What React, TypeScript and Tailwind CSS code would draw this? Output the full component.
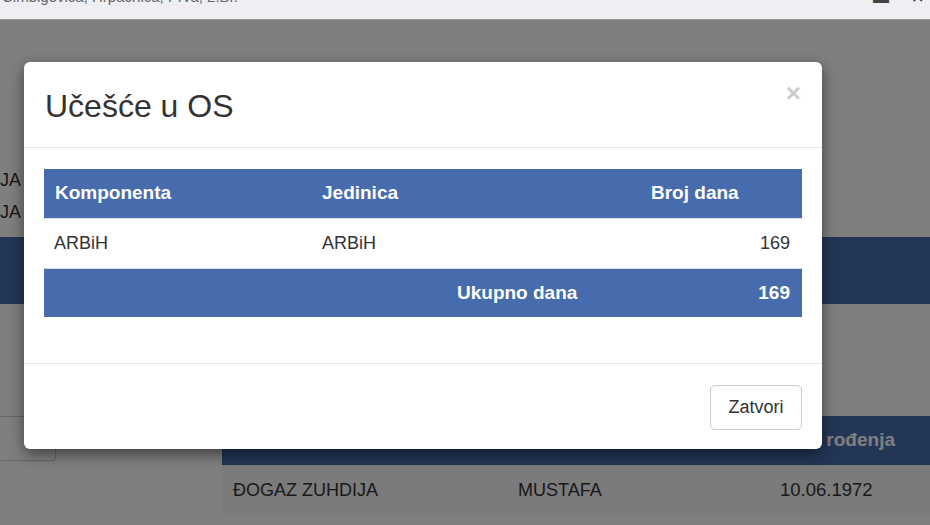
import { FC } from 'react'

const font = { fontFamily: '"Liberation Sans", Arial, sans-serif' }

const Modal: FC = () => {
  return (
    <div className="absolute left-[24px] top-[42px] w-[798px] h-[387px] bg-white rounded-[6px] shadow-[0_5px_15px_rgba(0,0,0,0.5)] flex flex-col">
      <div className="h-[86px] flex-none flex justify-between items-center px-[21px] border-b border-[#e5e5e5]">
        <h3 className="text-[32px] leading-[34px] text-[#333] mt-[2px]">Učešće u OS</h3>
        <button className="self-start mt-[18px] text-[26px] leading-none font-bold text-[#cccccc]">×</button>
      </div>
      <div className="flex-none px-[20px] pt-[21px] pb-[46px] border-b border-[#e5e5e5]">
        <div className="text-[18px]">
          <div className="grid grid-cols-[268px_329px_1fr] h-[49px] items-center bg-[#476cad] text-white font-bold text-[19px]">
            <span className="pl-[11px]">Komponenta</span>
            <span className="pl-[10px]">Jedinica</span>
            <span className="pl-[10px]">Broj dana</span>
          </div>
          <div className="grid grid-cols-[268px_329px_1fr] h-[50px] items-center border-t border-[#dddddd] text-[#333]">
            <span className="pl-[10px]">ARBiH</span>
            <span className="pl-[10px]">ARBiH</span>
            <span className="text-right pr-[12px]">169</span>
          </div>
          <div className="flex h-[49px] items-center justify-between border-t border-[#dddddd] bg-[#476cad] text-white font-bold text-[19px]">
            <span className="pl-[413px]">Ukupno dana</span>
            <span className="pr-[12px]">169</span>
          </div>
        </div>
      </div>
      <div className="flex-1 flex justify-end items-start px-[20px] pt-[21px]">
        <button className="h-[45px] w-[92px] border border-[#cccccc] rounded-[5px] bg-white text-[18px] text-[#333]">
          Zatvori
        </button>
      </div>
    </div>
  )
}

export default function App() {
  return (
    <div className="w-[930px] h-[525px] overflow-hidden flex flex-col bg-white" style={font}>
      <div className="h-[20px] flex-none bg-[#efeff3] border-b border-[#9a9a9a] flex justify-between overflow-hidden">
        <span className="-mt-[13px] pl-[2px] text-[15px] leading-[20px] text-[#666] whitespace-nowrap">
          Ćimbigovića, Hrpačnica, Prva, 2.Br.
        </span>
        <span className="-mt-[12px] flex gap-[22px] pr-[6px] text-[16px] leading-[20px] text-[#444]">
          <span>▬</span>
          <span>✕</span>
        </span>
      </div>

      <div className="relative flex-1 flex flex-col">
        <div className="pt-[150px] h-[217px] flex flex-col gap-[12px] text-[18px] text-[#333]">
          <div className="w-[21px] flex justify-end overflow-hidden whitespace-nowrap leading-[20px]">ZUHDIJA</div>
          <div className="w-[21px] flex justify-end overflow-hidden whitespace-nowrap leading-[20px]">ZUHDIJA</div>
        </div>
        <div className="h-[67px] bg-[#476cad]" />
        <div className="flex mt-[112px]">
          <div className="flex-none w-[56px] h-[45px] border border-l-0 border-[#cccccc] rounded-r-[4px]" />
          <div className="flex-none ml-[166px] w-[708px] text-[18px]">
            <div className="grid grid-cols-[285px_262px_161px] h-[49px] items-center bg-[#476cad] text-white font-bold">
              <span />
              <span />
              <span className="flex justify-end overflow-hidden pr-[35px] text-[19px] whitespace-nowrap">Datum rođenja</span>
            </div>
            <div className="grid grid-cols-[285px_262px_161px] h-[50px] items-center bg-[#f7f7f7] text-[#333]">
              <span className="pl-[11px]">ĐOGAZ ZUHDIJA</span>
              <span className="pl-[11px]">MUSTAFA</span>
              <span className="pl-[11px] text-[18.5px]">10.06.1972</span>
            </div>
          </div>
        </div>

        <div className="absolute inset-0 bg-black/50" />
        <Modal />
      </div>
    </div>
  )
}
